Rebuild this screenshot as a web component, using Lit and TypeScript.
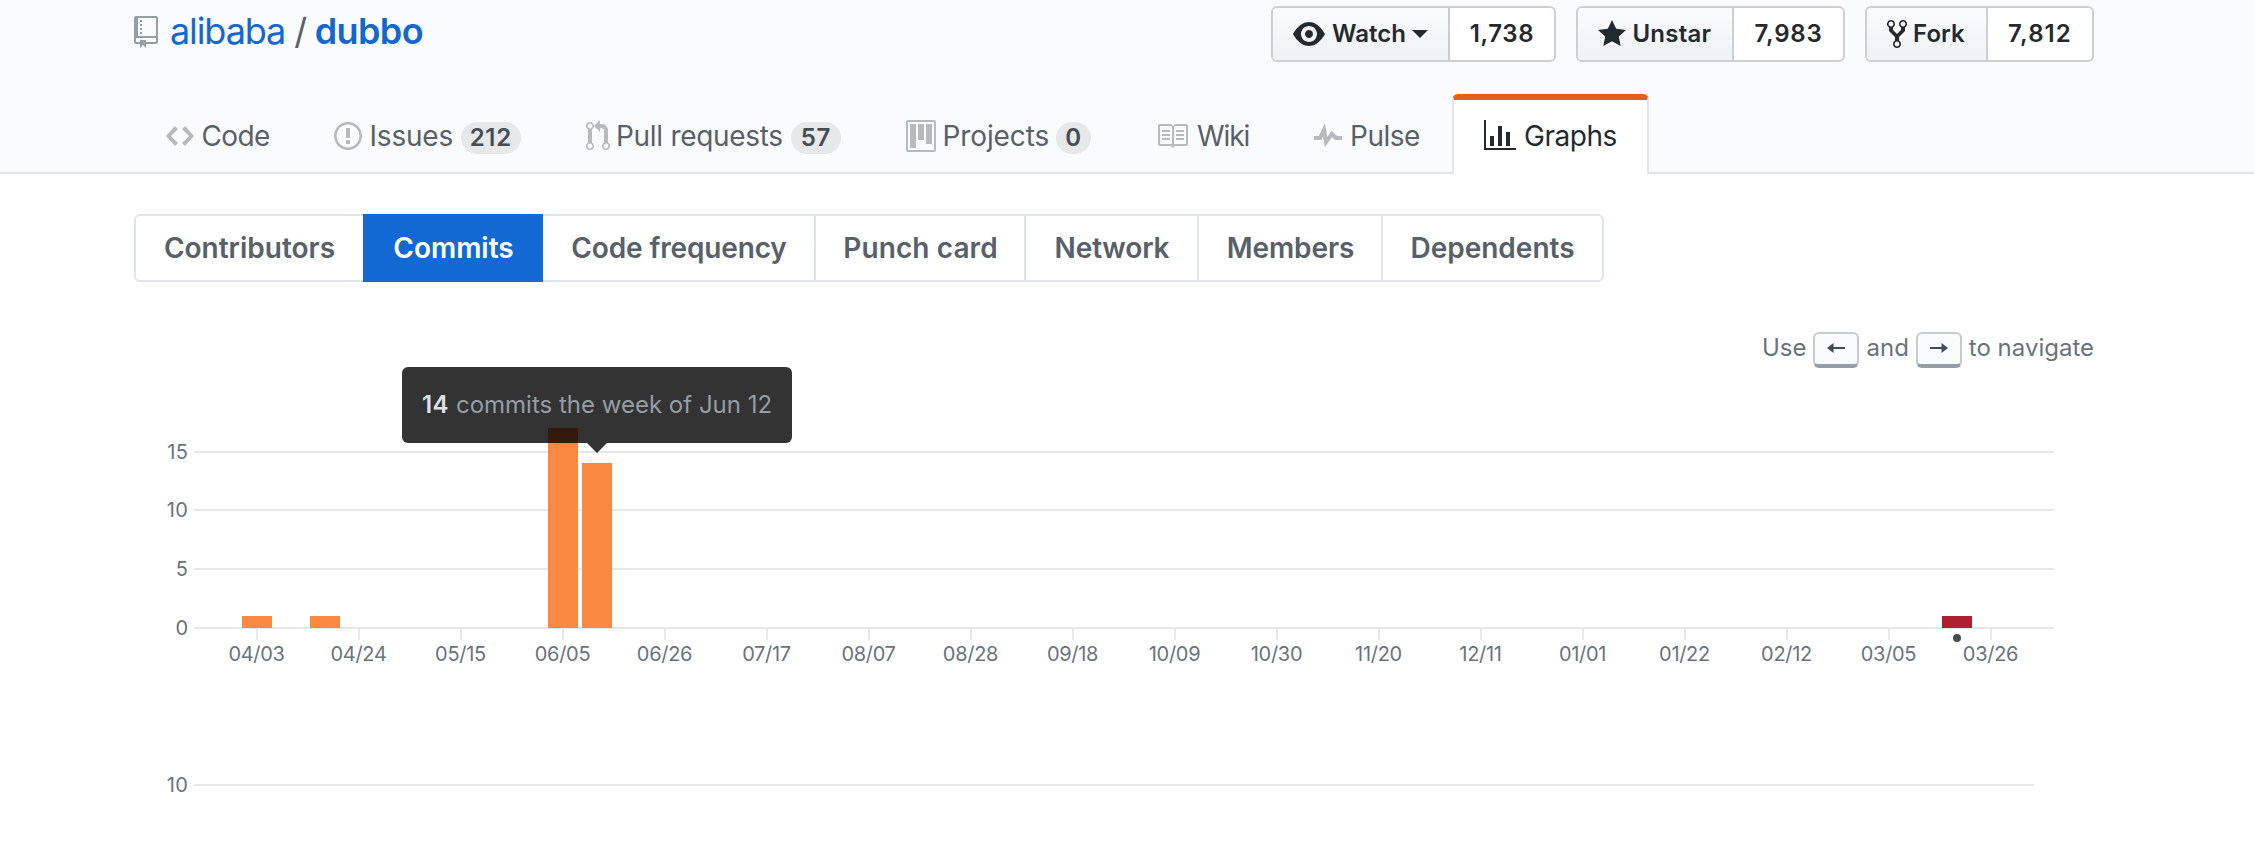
import { LitElement, html, svg, css, nothing } from "lit";
import { customElement } from "lit/decorators.js";
import { classMap } from "lit/directives/class-map.js";
import { styleMap } from "lit/directives/style-map.js";

const ICONS: Record<string, [number, string]> = {
  repo: [12, "M4 9H3V8h1v1zm0-3H3v1h1V6zm0-2H3v1h1V4zm0-2H3v1h1V2zm8-1v12c0 .55-.45 1-1 1H6v2l-1.5-1.5L3 16v-2H1c-.55 0-1-.45-1-1V1c0-.55.45-1 1-1h10c.55 0 1 .45 1 1zm-1 10H1v2h2v-1h3v1h5v-2zm0-10H2v9h9V1z"],
  code: [14, "M9.5 3L8 4.5 11.5 8 8 11.5 9.5 13 14 8 9.5 3zm-5 0L0 8l4.5 5L6 11.5 2.5 8 6 4.5 4.5 3z"],
  issue: [14, "M7 2.3c3.14 0 5.7 2.56 5.7 5.7s-2.56 5.7-5.7 5.7A5.71 5.71 0 0 1 1.3 8c0-3.14 2.56-5.7 5.7-5.7zM7 1C3.14 1 0 4.14 0 8s3.14 7 7 7 7-3.14 7-7-3.14-7-7-7zm1 3H6v5h2V4zm0 6H6v2h2v-2z"],
  pull: [12, "M11 11.28V5c-.03-.78-.34-1.47-.94-2.06C9.46 2.35 8.78 2.03 8 2H7V0L4 3l3 3V4h1c.27.02.48.11.69.31.21.2.3.42.31.69v6.28A1.993 1.993 0 0 0 10 15a1.993 1.993 0 0 0 1-3.72zm-1 2.92c-.66 0-1.2-.55-1.2-1.2 0-.65.55-1.2 1.2-1.2.65 0 1.2.55 1.2 1.2 0 .65-.55 1.2-1.2 1.2zM4 3c0-1.11-.89-2-2-2a1.993 1.993 0 0 0-1 3.72v6.56A1.993 1.993 0 0 0 2 15a1.993 1.993 0 0 0 1-3.72V4.72c.59-.34 1-.98 1-1.72zm-.8 10c0 .66-.55 1.2-1.2 1.2-.65 0-1.2-.55-1.2-1.2 0-.65.55-1.2 1.2-1.2.65 0 1.2.55 1.2 1.2zM2 4.2C1.34 4.2.8 3.65.8 3c0-.65.55-1.2 1.2-1.2.65 0 1.2.55 1.2 1.2 0 .65-.55 1.2-1.2 1.2z"],
  project: [15, "M10 12h3V2h-3v10zm-4-2h3V2H6v8zm-4 4h3V2H2v12zm-1 1h13V1H1v14zM14 0H1a1 1 0 0 0-1 1v14a1 1 0 0 0 1 1h13a1 1 0 0 0 1-1V1a1 1 0 0 0-1-1z"],
  book: [16, "M3 5h4v1H3V5zm0 3h4V7H3v1zm0 2h4V9H3v1zm11-5h-4v1h4V5zm0 2h-4v1h4V7zm0 2h-4v1h4V9zm2-6v9c0 .55-.45 1-1 1H9.5l-1 1-1-1H2c-.55 0-1-.45-1-1V3c0-.55.45-1 1-1h5.5l1 1 1-1H15c.55 0 1 .45 1 1zm-8 .5L7.5 3H2v9h6V3.5zm7-.5H9.5l-.5.5V12h6V3z"],
  pulse: [14, "M11.5 8L8.8 5.4 6.6 8.5 5.5 1.6 2.38 8H0v2h3.6l.9-1.8.9 5.4L9 8.5l1.6 1.5H14V8h-2.5z"],
  graph: [16, "M16 14v1H0V0h1v14h15zM5 13H3V8h2v5zm4 0H7V3h2v10zm4 0h-2V6h2v7z"],
  eye: [16, "M8.06 2C3 2 0 8 0 8s3 6 8.06 6C13 14 16 8 16 8s-3-6-7.94-6zM8 12c-2.2 0-4-1.78-4-4 0-2.2 1.8-4 4-4 2.22 0 4 1.8 4 4 0 2.22-1.78 4-4 4zm2-4c0 1.11-.89 2-2 2-1.11 0-2-.89-2-2 0-1.11.89-2 2-2 1.11 0 2 .89 2 2z"],
  star: [14, "M14 6l-4.9-.64L7 1 4.9 5.36 0 6l3.6 3.26L2.67 14 7 11.67 11.33 14l-.93-4.74z"],
  fork: [10, "M8 1a1.993 1.993 0 0 0-1 3.72V6L5 8 3 6V4.72A1.993 1.993 0 0 0 2 1a1.993 1.993 0 0 0-1 3.72V6.5l3 3v1.78A1.993 1.993 0 0 0 5 15a1.993 1.993 0 0 0 1-3.72V9.5l3-3V4.72A1.993 1.993 0 0 0 8 1zM2 4.2C1.34 4.2.8 3.65.8 3c0-.65.55-1.2 1.2-1.2.65 0 1.2.55 1.2 1.2 0 .65-.55 1.2-1.2 1.2zm3 10c-.66 0-1.2-.55-1.2-1.2 0-.65.55-1.2 1.2-1.2.65 0 1.2.55 1.2 1.2 0 .65-.55 1.2-1.2 1.2zm3-10c-.66 0-1.2-.55-1.2-1.2 0-.65.55-1.2 1.2-1.2.65 0 1.2.55 1.2 1.2 0 .65-.55 1.2-1.2 1.2z"],
};

const icon = (name: string) => {
  const [w, d] = ICONS[name];
  return html`<svg class="icon" width=${w * 2} height="32" viewBox="0 0 ${w} 16"><path fill-rule="evenodd" d=${d}></path></svg>`;
};

interface Item {
  label: string;
  width: number;
  spacing: number;
  icon?: string;
  count?: string;
  countWidth?: number;
  countSpacing?: number;
  current?: boolean;
  gap?: number;
}

const TABS: Item[] = [
  { label: "Code", icon: "code", width: 168, spacing: -0.6, gap: 7.5 },
  { label: "Issues", icon: "issue", width: 252, spacing: -0.2, gap: 7.5, count: "212", countWidth: 62, countSpacing: 0.7 },
  { label: "Pull requests", icon: "pull", width: 320, spacing: -0.3, gap: 6, count: "57", countWidth: 50, countSpacing: 0.7 },
  { label: "Projects", icon: "project", width: 250, spacing: -0.12, gap: 6.5, count: "0", countWidth: 36, countSpacing: 0 },
  { label: "Wiki", icon: "book", width: 158, spacing: -1.1, gap: 9 },
  { label: "Pulse", icon: "pulse", width: 170, spacing: -0.5, gap: 8 },
  { label: "Graphs", icon: "graph", width: 197, spacing: -0.45, gap: 8, current: true },
];

const ACTIONS: Item[] = [
  { label: "Watch", icon: "eye", width: 285, spacing: 0, gap: 7.5, count: "1,738", countWidth: 106, countSpacing: 0.6 },
  { label: "Unstar", icon: "star", width: 269, spacing: 0.2, gap: 7, count: "7,983", countWidth: 111, countSpacing: 0.75 },
  { label: "Fork", icon: "fork", width: 229, spacing: 0.05, gap: 6.5, count: "7,812", countWidth: 106, countSpacing: 1.1 },
];

const SUBNAV: Item[] = [
  { label: "Contributors", width: 229, spacing: 0 },
  { label: "Commits", width: 180, spacing: 0, current: true },
  { label: "Code frequency", width: 273, spacing: -0.14 },
  { label: "Punch card", width: 210, spacing: 0.1 },
  { label: "Network", width: 173, spacing: -0.15 },
  { label: "Members", width: 184, spacing: -0.12 },
  { label: "Dependents", width: 221, spacing: 0 },
];

const WEEKS = ["04/03", "04/24", "05/15", "06/05", "06/26", "07/17", "08/07", "08/28", "09/18", "10/09", "10/30", "11/20", "12/11", "01/01", "01/22", "02/12", "03/05", "03/26"];
const BARS = [
  { week: 0, top: 226, height: 12 },
  { week: 2, top: 226, height: 12 },
  { week: 9, top: 38, height: 200 },
  { week: 10, top: 73, height: 165 },
  { week: 50, top: 226, height: 12, active: true },
];
const LEVELS: [number, number][] = [[15, 61], [10, 119], [5, 178], [0, 237]];

const px = (n: number) => `${n}px`;

@customElement("app-root")
export class AppRoot extends LitElement {
  static styles = css`
    :host { display: block; width: 2254px; height: 858px; overflow: hidden; background: #fff; color: #24292e; font: 400 24px/36px Inter, "Liberation Sans", sans-serif; }
    * { box-sizing: border-box; }
    .icon { display: block; flex: none; fill: currentColor; }
    .head { height: 174px; padding: 0 160px 0 134px; background: #fafbfc; border-bottom: 2px solid #e1e4e8; display: flex; flex-direction: column; justify-content: space-between; }
    .top { display: flex; justify-content: space-between; }
    .title { display: flex; align-items: center; height: 62px; font-size: 36px; color: #1267d0; white-space: pre; }
    .title .icon { color: #959da5; margin: 2px 12px 0 0; }
    .owner { letter-spacing: -1.1px; }
    .slash { color: #586069; margin: 0 7.5px 0 9px; }
    .name { font-weight: 600; letter-spacing: -0.6px; }
    .actions { display: flex; gap: 20px; padding-top: 6px; }
    .action { display: flex; height: 56px; border: 2px solid #cdcfd1; border-radius: 6px; background: #fff; font-weight: 600; overflow: hidden; }
    .button { flex: 1; display: flex; align-items: center; padding-left: 19.5px; background: linear-gradient(-180deg, #fafbfc, #eff3f6 90%); border-right: 2px solid #cdcfd1; }
    .caret { width: 0; height: 0; border: 8px solid transparent; border-bottom: 0; border-top-color: currentColor; margin-left: -1px; }
    .total { display: flex; align-items: center; justify-content: center; padding-bottom: 1px; }
    .tabs { display: flex; height: 80px; margin-bottom: -2px; }
    .tab { display: flex; align-items: center; padding: 4px 30px 0 32px; font-size: 28px; color: #586069; white-space: nowrap; }
    .tab .icon { color: #b7babd; }
    .tab.current { background: #fff; color: #24292e; border: 2px solid #e1e4e8; border-width: 6px 2px 0; border-top-color: #e06023; border-radius: 6px 6px 0 0; padding: 0 0 2px 30px; }
    .tab.current .icon { color: inherit; }
    .pill { display: flex; justify-content: center; height: 32px; line-height: 31px; margin: 4px 3px 0 auto; border-radius: 20px; background: #e7e8ea; color: #444d56; font-size: 24px; font-weight: 600; }
    .body { padding: 40px 160px 0 134px; }
    .subnav { display: flex; width: 1470px; height: 68px; border: 2px solid #e1e4e8; border-radius: 6px; font-size: 28px; font-weight: 600; color: #586069; }
    .sub { display: flex; align-items: center; justify-content: center; margin: -2px 0; padding-left: 1px; border-right: 2px solid #e1e4e8; white-space: nowrap; }
    .sub:first-child, .sub:last-child { border-right: 0; }
    .sub:first-child { margin-left: -2px; padding-left: 2px; }
    .sub:last-child { margin-right: -2px; padding: 0 2px 0 0; }
    .sub.current { background: #1269d4; color: #fff; border: 0; }
    .hint { display: flex; justify-content: flex-end; align-items: center; height: 36px; margin-top: 48px; color: #6a737d; }
    .key { display: flex; width: 46px; height: 36px; justify-content: center; padding-top: 8px; margin: 4px 7px 0; background: #fafbfc; border: 2px solid #c6cbd1; border-bottom: 4px solid #959da5; border-radius: 6px; color: #444d56; }
    .key svg { fill: currentColor; }
    .charts { position: relative; width: 1960px; height: 468px; margin-top: 24px; }
    .plot { display: block; font-size: 20px; fill: #6a737d; }
    .grid { fill: #e8e8e8; }
    .bar { fill: #fb8841; }
    .bar.active { fill: #b01f2e; }
    .dot { fill: #444d56; }
    .level { text-anchor: end; letter-spacing: 0.5px; }
    .week { text-anchor: middle; letter-spacing: -0.3px; }
    .tip { position: absolute; left: 268px; top: -23px; width: 390px; height: 76px; padding-bottom: 1px; display: flex; align-items: center; justify-content: center; background: rgba(0, 0, 0, 0.8); border-radius: 6px; color: #959da5; white-space: pre; }
    .tip::after { content: ""; position: absolute; top: 100%; left: 185px; border: 10px solid transparent; border-bottom: 0; border-top-color: rgba(0, 0, 0, 0.8); }
    .tip b { color: #dfe2e5; font-weight: 600; letter-spacing: 0.6px; }
  `;

  private tab(t: Item) {
    return html`<div class=${classMap({ tab: true, current: !!t.current })} style=${styleMap({ width: px(t.width), gap: px(t.gap ?? 7), letterSpacing: px(t.spacing) })}>
      ${icon(t.icon!)}<span>${t.label}</span>
      ${t.count ? html`<span class="pill" style=${styleMap({ width: px(t.countWidth!), letterSpacing: px(t.countSpacing!) })}>${t.count}</span>` : nothing}
    </div>`;
  }

  private action(a: Item) {
    return html`<div class="action" style=${styleMap({ width: px(a.width) })}>
      <div class="button" style=${styleMap({ gap: px(a.gap!), letterSpacing: px(a.spacing) })}>
        ${icon(a.icon!)}<span>${a.label}</span>${a.icon === "eye" ? html`<i class="caret"></i>` : nothing}
      </div>
      <div class="total" style=${styleMap({ width: px(a.countWidth! - 2), letterSpacing: px(a.countSpacing!) })}>${a.count}</div>
    </div>`;
  }

  private plot() {
    return svg`
      ${LEVELS.map(([v, y]) => svg`<rect class="grid" x="60" y=${y} width="1860" height="2"></rect><text class="level" x="54.5" y=${y + 7.5}>${v}</text>`)}
      ${WEEKS.map((w, i) => svg`<rect class="grid" x=${122 + i * 102} y="238" width="2" height="12"></rect><text class="week" x=${122.5 + i * 102} y="271">${w}</text>`)}
      ${BARS.map((b) => svg`<rect class=${b.active ? "bar active" : "bar"} x=${108 + b.week * 34} y=${b.top} width="30" height=${b.height}></rect>`)}
      <circle class="dot" cx="1823" cy="248" r="4"></circle>
      <rect class="grid" x="60" y="394" width="1840" height="2"></rect><text class="level" x="54.5" y="402">10</text>`;
  }

  render() {
    return html`
      <header class="head">
        <div class="top">
          <div class="title">${icon("repo")}<span class="owner">alibaba</span><span class="slash">/</span><span class="name">dubbo</span></div>
          <div class="actions">${ACTIONS.map((a) => this.action(a))}</div>
        </div>
        <nav class="tabs">${TABS.map((t) => this.tab(t))}</nav>
      </header>
      <main class="body">
        <nav class="subnav">${SUBNAV.map((s) => html`<div class=${classMap({ sub: true, current: !!s.current })} style=${styleMap({ width: px(s.width), letterSpacing: px(s.spacing) })}>${s.label}</div>`)}</nav>
        <div class="hint">
          <span>Use</span>
          <span class="key"><svg width="18" height="12" viewBox="0 0 18 12"><path d="M0 6L6.5 1V4.9H18V7.1H6.5V11Z"></path></svg></span>
          <span>and</span>
          <span class="key"><svg width="18" height="12" viewBox="0 0 18 12"><path d="M18 6L11.5 1V4.9H0V7.1H11.5V11Z"></path></svg></span>
          <span>to navigate</span>
        </div>
        <section class="charts">
          <svg class="plot" width="1960" height="468" viewBox="0 0 1960 468">${this.plot()}</svg>
          <div class="tip"><b>14</b> commits the week of Jun 12</div>
        </section>
      </main>`;
  }
}
